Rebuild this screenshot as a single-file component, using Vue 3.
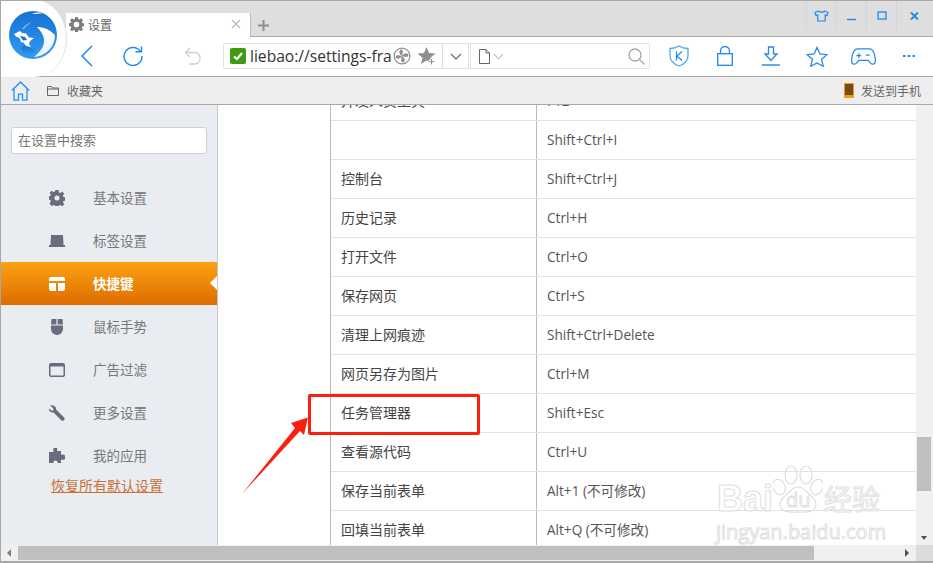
<script setup>
const navItems = [
  { label: "基本设置", icon: "gear" },
  { label: "标签设置", icon: "tab" },
  { label: "快捷键", icon: "keys", active: true },
  { label: "鼠标手势", icon: "mouse" },
  { label: "广告过滤", icon: "window" },
  { label: "更多设置", icon: "wrench" },
  { label: "我的应用", icon: "puzzle" },
];

const rows = [
  ["开发人员工具", "F12"],
  ["", "Shift+Ctrl+I"],
  ["控制台", "Shift+Ctrl+J"],
  ["历史记录", "Ctrl+H"],
  ["打开文件", "Ctrl+O"],
  ["保存网页", "Ctrl+S"],
  ["清理上网痕迹", "Shift+Ctrl+Delete"],
  ["网页另存为图片", "Ctrl+M"],
  ["任务管理器", "Shift+Esc"],
  ["查看源代码", "Ctrl+U"],
  ["保存当前表单", "Alt+1 (不可修改)"],
  ["回填当前表单", "Alt+Q (不可修改)"],
];
</script>

<template>
  <div class="window">
    <div class="tabstrip">
      <div class="tab">
        <svg class="tab-gear" viewBox="0 0 16 16" width="15" height="15">
          <path fill="#7d7d7d" fill-rule="evenodd" d="M6.6 0h2.800l.4 2.200 1.200.5L12.900 1.400l2 2-1.300 1.900.5 1.200 2.200.4v2.800l-2.200.4-.5 1.200 1.300 1.900-2 2-1.900-1.300-1.200.5-.4 2.200H6.600l-.4-2.200-1.200-.5-1.900 1.300-2-2 1.300-1.900-.5-1.200L-.300 9.400V6.600l2.200-.4.5-1.200L1.100 3.400l2-2L5 2.700l1.200-.5zM8 5a3 3 0 1 0 0 6 3 3 0 0 0 0-6z" />
        </svg>
        <span class="tab-title">设置</span>
        <svg class="tab-close" viewBox="0 0 10 10" width="10" height="10">
          <path d="M1 1l8 8M9 1L1 9" stroke="#bdbdbd" stroke-width="1.300" fill="none" />
        </svg>
      </div>
      <svg class="tab-plus" viewBox="0 0 11 11" width="11" height="11">
        <path d="M5.500 0v11M0 5.500h11" stroke="#8c8c8c" stroke-width="2" fill="none" />
      </svg>
      <div class="win-controls">
        <div class="win-btn">
          <svg viewBox="0 0 15 12" width="15" height="12">
            <path d="M4.500 1L1 2.500l1 3 1.800-.4V11h7.400V5.100l1.800.4 1-3L10.500 1c-.6 1.500-5.400 1.500-6 0z" fill="none" stroke="#1e88f0" stroke-width="1.200" />
          </svg>
        </div>
        <div class="win-btn">
          <svg viewBox="0 0 10 10" width="10" height="10"><path d="M0 8.500h9" stroke="#1e88f0" stroke-width="1.400" /></svg>
        </div>
        <div class="win-btn">
          <svg viewBox="0 0 10 10" width="10" height="10"><rect x="1" y="1" width="8" height="7" fill="none" stroke="#1e88f0" stroke-width="1.300" /></svg>
        </div>
        <div class="win-btn">
          <svg viewBox="0 0 10 10" width="10" height="10"><path d="M1 1.500l7 7M8 1.500l-7 7" stroke="#1e88f0" stroke-width="1.800" /></svg>
        </div>
      </div>
    </div>

    <div class="toolbar">
      <div class="nav-btns">
        <svg viewBox="0 0 13 22" width="13" height="22">
          <path d="M12 1L2 11l10 10" fill="none" stroke="#1e88f0" stroke-width="1.500" />
        </svg>
        <svg viewBox="0 0 20 20" width="20" height="20">
          <path d="M17.500 5.500A9 9 0 1 0 19 10" fill="none" stroke="#1e88f0" stroke-width="1.400" />
          <path d="M12.500 5.800h6V.5" fill="none" stroke="#1e88f0" stroke-width="1.400" />
        </svg>
        <svg viewBox="0 0 17 18" width="17" height="18">
          <path d="M6 1L1.500 5.500 6 10M1.500 5.500H11a5 5 0 0 1 5 5V12a5 5 0 0 1-5 5H5" fill="none" stroke="#cfcfcf" stroke-width="1.300" />
        </svg>
      </div>
      <div class="omnibox">
        <div class="address">
          <span class="secure">
            <svg viewBox="0 0 12 12" width="12" height="12"><path d="M2 6.500l3 2.500 5-6" fill="none" stroke="#fff" stroke-width="2.200" /></svg>
          </span>
          <span class="url">liebao://settings-fra</span>
          <svg class="fan" viewBox="0 0 20 20" width="18" height="18">
            <circle cx="10" cy="10" r="8.800" fill="none" stroke="#8f8f8f" stroke-width="1.400" />
            <path d="M10 10C7 8 6 5.500 8 3c2.500-.5 4 1 2 7zM10 10c2-3 4.500-4 7-2 .5 2.500-1 4-7 2zM10 10c3 2 4 4.500 2 7-2.500.5-4-1-2-7zM10 10c-2 3-4.500 4-7 2-.5-2.500 1-4 7-2z" fill="#8f8f8f" />
          </svg>
          <svg class="addstar" viewBox="0 0 18 18" width="18" height="18">
            <path d="M8.500 0l2.500 6 6.500.5-5 4.200 1.500 6.300-5.500-3.400L3 17l1.500-6.300L-.500 6.500 6 6z" fill="#8f8f8f" />
            <path d="M13.500 11.500v6M10.500 14.500h6" stroke="#fff" stroke-width="3" />
            <path d="M13.500 12v5.500M10.800 14.700h5.500" stroke="#8f8f8f" stroke-width="1" />
          </svg>
        </div>
        <div class="drop">
          <svg viewBox="0 0 12 7" width="12" height="7"><path d="M1 1l5 5 5-5" fill="none" stroke="#666" stroke-width="1.200" /></svg>
        </div>
        <div class="search">
          <svg viewBox="0 0 11 15" width="11" height="15">
            <path d="M.5.500h6.500l3.500 3.500v10.500H.5zM7 .5V4h3.500" fill="none" stroke="#666" stroke-width="1" />
          </svg>
          <svg class="search-caret" viewBox="0 0 12 7" width="11" height="7"><path d="M1 1l5 5 5-5" fill="none" stroke="#bbb" stroke-width="1.200" /></svg>
          <svg class="search-glass" viewBox="0 0 17 17" width="17" height="17">
            <circle cx="7" cy="7" r="6" fill="none" stroke="#a8a8a8" stroke-width="1.300" />
            <path d="M11.500 11.500l5 5" stroke="#a8a8a8" stroke-width="1.300" />
          </svg>
        </div>
      </div>
      <div class="tools">
        <span class="tool">
          <svg viewBox="0 0 20 22" width="20" height="22">
            <path d="M10 1c2.500 1.700 5.500 2.500 9 2.500v7c0 5-3.500 8.500-9 10.500-5.500-2-9-5.500-9-10.500v-7C4.500 3.500 7.500 2.700 10 1z" fill="none" stroke="#52a5f5" stroke-width="1.300" />
            <path d="M7.500 6.500v9M13 6.500L7.800 11l5.400 4.500" fill="none" stroke="#1e88f0" stroke-width="1.200" />
          </svg>
        </span>
        <span class="tool">
          <svg viewBox="0 0 16 20" width="16" height="20">
            <rect x=".7" y="7.700" width="14.600" height="11.600" fill="none" stroke="#1e88f0" stroke-width="1.300" />
            <path d="M3.500 7.500V5a4.500 4.500 0 0 1 9 0v2.500" fill="none" stroke="#1e88f0" stroke-width="1.300" />
          </svg>
        </span>
        <span class="tool">
          <svg viewBox="0 0 18 20" width="18" height="20">
            <path d="M6.500 1h5v7H15l-6 6.500L3 8h3.500z" fill="none" stroke="#1e88f0" stroke-width="1.300" />
            <path d="M0 19h18" stroke="#1e88f0" stroke-width="1.400" />
          </svg>
        </span>
        <span class="tool">
          <svg viewBox="0 0 22 21" width="22" height="21">
            <path d="M11 1.500l2.900 6.500 7 .7-5.300 4.600 1.600 6.900L11 16.900l-6.200 3.300 1.600-6.900L1.100 8.700l7-.7z" fill="none" stroke="#1e88f0" stroke-width="1.300" />
          </svg>
        </span>
        <span class="tool">
          <svg viewBox="0 0 26 18" width="25" height="17">
            <path d="M7 1h12c3 0 4.500 2 5.500 5.500 1 3.500 1.500 7 .5 9.500-1 1.500-3 1.500-4.500 0L18 13H8l-2.500 3c-1.500 1.500-3.500 1.500-4.500 0C0 13.500.5 10 1.500 6.500 2.500 3 4 1 7 1z" fill="none" stroke="#1e88f0" stroke-width="1.300" />
            <path d="M8 5.500v5M5.500 8h5M15.500 7.500h4" stroke="#1e88f0" stroke-width="1.300" />
          </svg>
        </span>
        <span class="tool">
          <svg viewBox="0 0 12 4" width="12" height="4">
            <path d="M0 1h2.500v2H0zM4.700 1h2.500v2H4.700zM9.400 1h2.500v2H9.400z" fill="#1e88f0" />
          </svg>
        </span>
      </div>
    </div>

    <div class="bookmarks">
      <svg viewBox="0 0 19 20" width="19" height="20">
        <path d="M.8 9.500L9.500 1l8.700 8.500M3 7.500v11.700h4.500v-6h4v6H16V7.500" fill="none" stroke="#1e90ff" stroke-width="1.300" />
      </svg>
      <svg class="folder" viewBox="0 0 12 10" width="12" height="10">
        <path d="M.5.500h4l1 1.500h6v7.500H.5zM.5 3h11" fill="none" stroke="#666" stroke-width="1" />
      </svg>
      <span class="bm-label">收藏夹</span>
      <span class="send">
        <span class="phone"></span>
        发送到手机
      </span>
    </div>

    <div class="page">
      <div class="viewport">
        <aside class="sidebar">
          <div class="search-box">在设置中搜索</div>
          <ul class="nav">
            <li v-for="item in navItems" :key="item.label" :class="{ active: item.active }">
              <svg class="nav-icon" viewBox="0 0 16 16" width="16" height="16">
                <path v-if="item.icon === 'gear'" fill="currentColor" fill-rule="evenodd" d="M6.500 0h3l.4 2.400 1.300.6 2-1.400 2.100 2.100-1.400 2 .6 1.300 2.200.5v3l-2.200.4-.6 1.300 1.400 2-2.100 2.100-2-1.400-1.300.6-.4 2.200h-3l-.4-2.200-1.300-.6-2 1.400L.5 13.200l1.400-2-.6-1.300L-.900 9.500v-3l2.200-.4.600-1.300-1.400-2L2.600 .7l2 1.400 1.300-.6zM8 5.500a2.500 2.500 0 1 0 0 5 2.500 2.500 0 0 0 0-5z" />
                <path v-else-if="item.icon === 'tab'" fill="currentColor" d="M2 2h12l.5 10H16v2H0v-2h1.500z" />
                <path v-else-if="item.icon === 'keys'" fill="currentColor" d="M2 1h12a2 2 0 0 1 2 2v2H0V3a2 2 0 0 1 2-2zM0 7h7v8H2a2 2 0 0 1-2-2zM9 7h7v6a2 2 0 0 1-2 2H9z" />
                <path v-else-if="item.icon === 'mouse'" fill="currentColor" d="M2.500 0H7.400v5.400H2zM8.600 0h4.900l.5 5.400H8.600zM2 6.600h12V10a6 6 0 0 1-12 0z" />
                <path v-else-if="item.icon === 'window'" fill="currentColor" fill-rule="evenodd" d="M2 1h12a2 2 0 0 1 2 2v10a2 2 0 0 1-2 2H2a2 2 0 0 1-2-2V3a2 2 0 0 1 2-2zM1.500 4.500V13c0 .4.100.5.500.5h12c.4 0 .5-.1.500-.5V4.500z" />
                <path v-else-if="item.icon === 'wrench'" fill="currentColor" d="M1 .5l3 2.500.5 1.500L3 6 .2 3.500C-.5 6 1.500 8 4.500 7.500l8 8c1 .8 2.500 0 3-1 .3-.7.200-1.500-.4-2l-8-8C7.500 2 5 -.5 1 .5z" />
                <path v-else fill="currentColor" d="M5 0h3c.5 1 .5 2 0 3h4v4c1-.6 3-.6 4 .5V11c-1 1-3 1-4 .5V15H8.500c.5-1.500-.5-2.500-2-2.500s-2.500 1-2 2.500H0V4h4.500C4 2.500 4 1 5 0z" />
              </svg>
              <span class="nav-label">{{ item.label }}</span>
            </li>
          </ul>
          <a class="reset">恢复所有默认设置</a>
        </aside>
        <main class="content">
          <div class="table">
            <div v-for="row in rows" :key="row[1]" class="row">
              <div class="cell name">{{ row[0] }}</div>
              <div class="cell key">{{ row[1] }}</div>
            </div>
          </div>
        </main>
        <div class="vscroll">
          <div class="vthumb"></div>
          <span class="arrow-down"></span>
        </div>
      </div>
      <div class="hscroll">
        <span class="arrow-left"></span>
        <div class="hthumb"></div>
        <span class="arrow-right"></span>
        <div class="corner"></div>
      </div>
    </div>

    <!-- logo sits over tab strip and toolbar -->
    <div class="logo">
      <svg viewBox="0 0 50 50" width="50" height="50">
        <defs>
          <linearGradient id="lg" x1="0" y1="0" x2="0" y2="1">
            <stop offset="0" stop-color="#1570d4" />
            <stop offset="1" stop-color="#349cf0" />
          </linearGradient>
          <linearGradient id="lw" x1="0" y1="0" x2="0" y2="1">
            <stop offset="0" stop-color="#fff" />
            <stop offset="1" stop-color="#e6f2fd" />
          </linearGradient>
        </defs>
        <circle cx="25" cy="25" r="24" fill="url(#lg)" />
        <!-- crescent of the body, lower right -->
        <path d="M29 17c6 0 12 2 18 8 0 12-9 21-21 22C32 42 37 36 36 29c-.6-4-3-8-7-12z" fill="url(#lw)" />
        <!-- lower right light fill, inside the ring -->
        <path d="M16 35l5 1 3 3 3-1c-1 3-1 6-2 8-5 0-10-3-12-7z" fill="url(#lg)" />
        <!-- open jaw -->
        <path d="M6 24l6-3 2 2 4 .5 3 4 5 .5-4 3-1 3 2 3-5-1-3-4-2 .5-1-4-4-2z" fill="#fff" />
        <path d="M12 26l5 1 2 3-4 .5z" fill="#1570d4" />
        <!-- forehead and back highlights -->
        <path d="M14 19c3-4 6-6 10-7-3 2-6 4-8 7z" fill="#7dbdf6" />
        <path d="M24 4c4-1.600 8-1.800 11-.8-3 .3-7 .8-11 .8z" fill="#fff" />
      </svg>
    </div>

    <!-- annotation drawn on top of the screenshot -->
    <div class="highlight"></div>
    <svg class="arrow" viewBox="0 0 70 78" width="70" height="78">
      <path d="M1 77L54 11l-4-5L67 .5 63 18l-4-4z" fill="#fb1f10" />
    </svg>

    <div class="watermark">
      <svg class="paw" viewBox="0 0 50 54" width="50" height="54">
        <g fill="none" stroke="#dedede" stroke-width="1.200">
          <ellipse cx="18" cy="12" rx="6" ry="9" />
          <ellipse cx="33" cy="12" rx="6" ry="9" />
          <ellipse cx="6" cy="24" rx="6" ry="8" transform="rotate(-25 6 24)" />
          <ellipse cx="44" cy="24" rx="6" ry="8" transform="rotate(25 44 24)" />
          <path d="M25 24c6 0 8 5 13 9 5 4 6 8 4 12-3 5-10 4-17 4s-14 1-17-4c-2-4-1-8 4-12 5-4 7-9 13-9z" />
        </g>
      </svg>
      <span class="wm-bai">Bai</span>
      <span class="wm-du">du</span>
      <span class="wm-jy">经验</span>
      <span class="wm-url">jingyan.baidu.com</span>
    </div>
  </div>
</template>

<style scoped>
.window {
  position: relative;
  width: 933px;
  height: 563px;
  box-sizing: border-box;
  border-top: 1px solid #a8a8a8;
  border-left: 1px solid #a8a8a8;
  border-bottom: 2px solid #a8a8a8;
  background: #fff;
  overflow: hidden;
  display: flex;
  flex-direction: column;
  font-family: "Open Sans", "Noto Sans CJK SC", sans-serif;
  font-size: 14px;
  color: #555;
}

.tabstrip {
  height: 36px;
  box-sizing: border-box;
  flex: none;
  background: #dedede;
  border-bottom: 1px solid #a8a8a8;
  display: flex;
  align-items: flex-end;
  padding-left: 65px;
}
.tab {
  width: 185px;
  height: 24px;
  margin-bottom: -1px;
  background: #fff;
  box-sizing: border-box;
  border-right: 1px solid #bdbdbd;
  display: flex;
  align-items: center;
  padding: 0 8px 0 3px;
}
.tab-gear {
  margin-top: -2px;
}
.tab-title {
  margin-left: 4px;
  font-size: 12px;
  color: #666;
  flex: 1;
}
.tab-close {
  margin: -2px 1px 0 0;
}
.tab-plus {
  margin: 0 0 5px 7px;
}
.win-controls {
  margin-left: auto;
  align-self: flex-start;
  display: flex;
  height: 30px;
}
.win-btn {
  width: 30px;
  height: 30px;
  box-sizing: border-box;
  border-left: 1px solid #d2d6dc;
  display: flex;
  align-items: center;
  justify-content: center;
}
.win-btn:last-child {
  width: 37px;
}

.toolbar {
  height: 40px;
  box-sizing: border-box;
  flex: none;
  background: #fff;
  border-bottom: 1px solid #a8a8a8;
  display: flex;
  align-items: center;
  padding-left: 79px;
  padding-bottom: 1px;
}
.nav-btns {
  display: flex;
  align-items: center;
  gap: 30px;
  width: 143px;
}
.nav-btns svg:last-child {
  margin-left: 11px;
}
.omnibox {
  display: flex;
  height: 26px;
  width: 427px;
  box-sizing: border-box;
  border: 1px solid #e2e2e2;
  border-radius: 2px;
}
.address {
  width: 219px;
  display: flex;
  align-items: center;
  padding-left: 6px;
  box-sizing: border-box;
  border-right: 1px solid #dcdcdc;
}
.secure {
  width: 16px;
  height: 16px;
  border-radius: 2px;
  background: #3f9a10;
  display: flex;
  align-items: center;
  justify-content: center;
  flex: none;
}
.url {
  margin-left: 4px;
  font-size: 15.600px;
  color: #333;
  white-space: nowrap;
}
.fan {
  flex: none;
  margin-left: 1px;
}
.addstar {
  margin-left: 7px;
  flex: none;
}
.drop {
  width: 26px;
  display: flex;
  align-items: center;
  justify-content: center;
  box-sizing: border-box;
  border-right: 1px solid #e2e2e2;
  margin-right: 1px;
}
.search {
  flex: 1;
  display: flex;
  align-items: center;
  padding: 0 4px 0 8px;
  border-left: 1px solid #e2e2e2;
}
.search-caret {
  margin-left: 3px;
}
.search-glass {
  margin-left: auto;
}
.tools {
  flex: 1;
  display: flex;
  align-items: center;
  padding-left: 6px;
}
.tool {
  width: 46px;
  display: flex;
  justify-content: center;
}

.bookmarks {
  height: 28px;
  box-sizing: border-box;
  flex: none;
  background: #eee;
  border-bottom: 1px solid #a8a8a8;
  display: flex;
  align-items: center;
  padding-left: 10px;
  font-size: 12px;
  color: #666;
}
.folder {
  margin-left: 17px;
}
.bm-label {
  margin-left: 8px;
}
.send {
  margin-left: auto;
  margin-right: 12px;
  display: flex;
  align-items: center;
  gap: 7px;
}
.phone {
  width: 10px;
  height: 15px;
  box-sizing: border-box;
  background: #7a4a1c;
  border: 1.500px solid #f39c12;
  border-bottom-width: 3px;
  border-radius: 1px;
}

.page {
  flex: 1;
  min-height: 0;
  display: flex;
  flex-direction: column;
}
.viewport {
  flex: 1;
  min-height: 0;
  display: flex;
}
.sidebar {
  width: 217px;
  flex: none;
  box-sizing: border-box;
  background: #e9edf2;
  border-right: 1px solid #c4c8cd;
  padding: 22px 0 0 10px;
}
.search-box {
  width: 196px;
  height: 27px;
  box-sizing: border-box;
  background: #fff;
  border: 1px solid #d0d0d0;
  border-radius: 3px;
  padding-left: 6px;
  line-height: 25px;
  font-size: 13px;
  color: #777;
}
.nav {
  list-style: none;
  margin: 22px 0 0 -10px;
  padding: 0;
}
.nav li {
  height: 43px;
  display: flex;
  align-items: center;
  padding-left: 48px;
  color: #777;
  font-size: 13.500px;
  position: relative;
}
.nav-label {
  margin-top: -2px;
}
.nav-icon {
  color: #6a6c7e;
  margin-right: 28px;
  flex: none;
}
.nav li.active {
  width: 216px;
  box-sizing: border-box;
  background: linear-gradient(#fca311, #dd6c00);
  color: #fff;
  font-weight: 700;
}
.nav li.active .nav-icon {
  color: #fff;
}
.nav li.active::after {
  content: "";
  position: absolute;
  right: 0;
  top: 14px;
  border: 7px solid transparent;
  border-left: 0;
  border-right-color: #fff;
}
.reset {
  display: block;
  margin: 0 0 0 40px;
  font-size: 14px;
  line-height: 18px;
  color: #c87137;
  text-decoration: underline;
}

.content {
  flex: 1;
  min-width: 0;
  overflow: hidden;
  padding-left: 112px;
}
.table {
  margin-top: -23px;
  border-left: 1px solid #bbb;
}
.row {
  display: flex;
  height: 39px;
  box-sizing: border-box;
  border-bottom: 1px solid #e2e2e2;
}
.cell {
  line-height: 38px;
  font-size: 13.600px;
  color: #555;
  white-space: nowrap;
}
.name {
  width: 206px;
  box-sizing: border-box;
  padding-left: 10px;
  border-right: 1px solid #bbb;
  font-size: 14px;
  color: #444;
}
.key {
  padding-left: 10px;
}

.vscroll {
  width: 17px;
  flex: none;
  background: #f0f0f0;
  position: relative;
}
.vthumb {
  position: absolute;
  left: 1px;
  width: 14px;
  top: 332px;
  height: 54px;
  background: #bfbfbf;
}
.arrow-down {
  position: absolute;
  bottom: 5px;
  left: 5px;
  border: 3.500px solid transparent;
  border-bottom: 0;
  border-top: 4px solid #505050;
}
.hscroll {
  height: 16px;
  flex: none;
  background: #f0f0f0;
  display: flex;
  align-items: center;
  position: relative;
}
.arrow-left {
  margin-left: 6px;
  border: 4px solid transparent;
  border-left: 0;
  border-right: 4px solid #808080;
}
.hthumb {
  width: 796px;
  height: 14px;
  margin-left: 7px;
  background: #bfbfbf;
}
.arrow-right {
  margin-left: 91px;
  border: 4px solid transparent;
  border-right: 0;
  border-left: 4px solid #505050;
}
.corner {
  position: absolute;
  right: 0;
  top: 0;
  width: 17px;
  height: 16px;
  background: #dcdcdc;
}

.logo {
  position: absolute;
  left: 0;
  top: -1px;
  width: 66px;
  height: 77px;
  background: #fff;
  border-radius: 0 34px 34px 0 / 0 40px 40px 0;
  border-right: 1px solid #dedede;
  box-sizing: border-box;
  padding: 10px 0 0 7px;
}
.logo svg {
  display: block;
}
.highlight {
  position: absolute;
  left: 307px;
  top: 393px;
  width: 172px;
  height: 41px;
  box-sizing: border-box;
  border: 3px solid #fb1f10;
  border-radius: 2px;
}
.arrow {
  position: absolute;
  left: 240px;
  top: 416px;
}

.watermark {
  position: absolute;
  left: 715px;
  top: 461px;
  width: 170px;
  height: 90px;
  color: rgba(255, 255, 255, 0.75);
  -webkit-text-stroke: 1px #e0e0e0;
  pointer-events: none;
}
.paw {
  position: absolute;
  left: 57px;
  top: 1px;
}
.wm-bai {
  position: absolute;
  left: 1px;
  top: 16px;
  font-size: 36px;
  line-height: 42px;
  font-family: "Liberation Sans", sans-serif;
  font-weight: 700;
}
.wm-du {
  position: absolute;
  left: 70px;
  top: 26px;
  font-size: 20px;
  line-height: 24px;
}
.wm-jy {
  position: absolute;
  left: 108px;
  top: 20px;
  font-size: 28px;
  line-height: 34px;
}
.wm-url {
  position: absolute;
  left: 0;
  top: 58px;
  font-size: 20px;
  line-height: 24px;
}
</style>
